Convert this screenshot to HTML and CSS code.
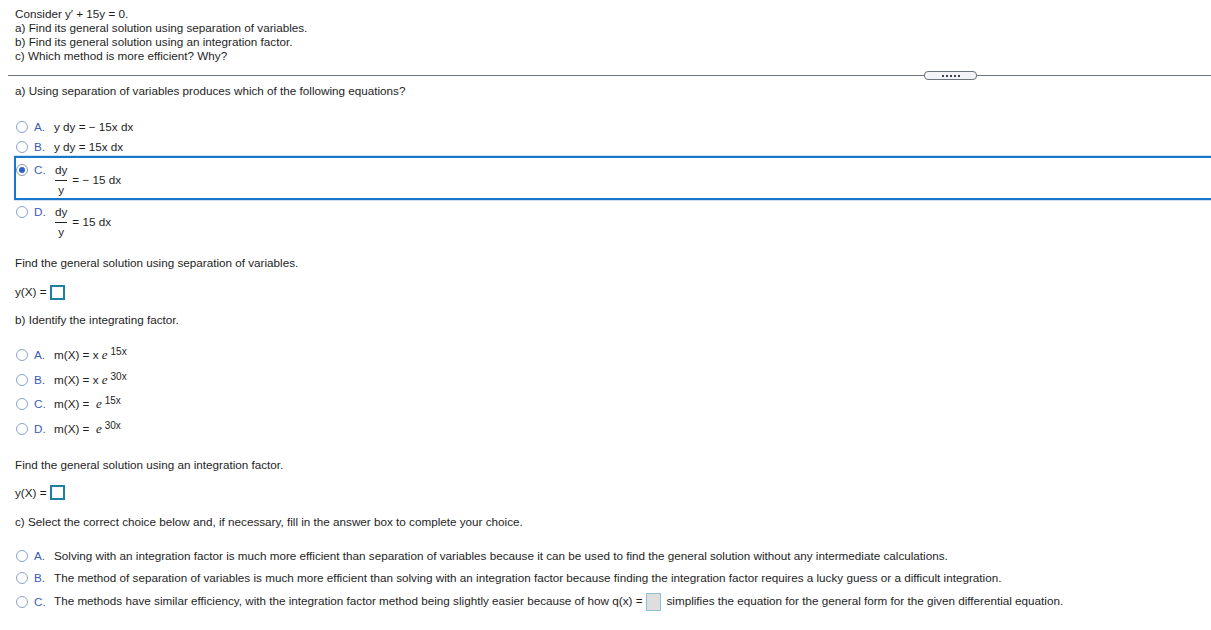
FILE: index.html
```html
<!DOCTYPE html>
<html lang="en">
<head>
<meta charset="utf-8">
<title>Differential equation question</title>
<link rel="stylesheet" href="styles.css">
</head>
<body>
<div class="page">
  <div class="intro">
    <p>Consider y&prime; + 15y = 0.</p>
    <p>a) Find its general solution using separation of variables.</p>
    <p>b) Find its general solution using an integration factor.</p>
    <p>c) Which method is more efficient? Why?</p>
  </div>

  <div class="rule"><span class="pill"><i></i><i></i><i></i><i></i><i></i></span></div>

  <p class="q q-a">a) Using separation of variables produces which of the following equations?</p>

  <div class="opts opts-a">
    <div class="opt">
      <span class="radio"></span><span class="lbl">A.</span>
      <span class="content">y dy = &minus; 15x dx</span>
    </div>
    <div class="opt">
      <span class="radio"></span><span class="lbl">B.</span>
      <span class="content">y dy = 15x dx</span>
    </div>
    <div class="opt sel">
      <span class="radio on"></span><span class="lbl">C.</span>
      <span class="content fracrow">
        <span class="frac"><span class="num">dy</span><span class="bar"></span><span class="den">y</span></span>
        <span class="rhs">= &minus; 15 dx</span>
      </span>
    </div>
    <div class="opt fopt">
      <span class="radio"></span><span class="lbl">D.</span>
      <span class="content fracrow">
        <span class="frac"><span class="num">dy</span><span class="bar"></span><span class="den">y</span></span>
        <span class="rhs">= 15 dx</span>
      </span>
    </div>
  </div>

  <p class="q q-find1">Find the general solution using separation of variables.</p>
  <div class="answer ans1">y(X) =<span class="ansbox"></span></div>

  <p class="q q-b">b) Identify the integrating factor.</p>

  <div class="opts opts-b">
    <div class="opt optb">
      <span class="radio"></span><span class="lbl">A.</span>
      <span class="content">m(X) = x <i class="e">e</i><sup>15x</sup></span>
    </div>
    <div class="opt optb">
      <span class="radio"></span><span class="lbl">B.</span>
      <span class="content">m(X) = x <i class="e">e</i><sup>30x</sup></span>
    </div>
    <div class="opt optb">
      <span class="radio"></span><span class="lbl">C.</span>
      <span class="content">m(X) = &nbsp;<i class="e">e</i><sup>15x</sup></span>
    </div>
    <div class="opt optb">
      <span class="radio"></span><span class="lbl">D.</span>
      <span class="content">m(X) = &nbsp;<i class="e">e</i><sup>30x</sup></span>
    </div>
  </div>

  <p class="q q-find2">Find the general solution using an integration factor.</p>
  <div class="answer ans2">y(X) =<span class="ansbox"></span></div>

  <p class="q q-c">c) Select the correct choice below and, if necessary, fill in the answer box to complete your choice.</p>

  <div class="opts opts-c">
    <div class="opt optc">
      <span class="radio"></span><span class="lbl">A.</span>
      <span class="content">Solving with an integration factor is much more efficient than separation of variables because it can be used to find the general solution without any intermediate calculations.</span>
    </div>
    <div class="opt optc">
      <span class="radio"></span><span class="lbl">B.</span>
      <span class="content">The method of separation of variables is much more efficient than solving with an integration factor because finding the integration factor requires a lucky guess or a difficult integration.</span>
    </div>
    <div class="opt optc optc-tall">
      <span class="radio"></span><span class="lbl">C.</span>
      <span class="content">The methods have similar efficiency, with the integration factor method being slightly easier because of how q(x) =<span class="graybox"></span>simplifies the equation for the general form for the given differential equation.</span>
    </div>
  </div>
</div>
</body>
</html>
```

FILE: styles.css
```css
html, body {
  margin: 0;
  background: #ffffff;
}

body {
  font-family: "Liberation Sans", Arial, sans-serif;
  font-size: 11.7px;
  line-height: 14px;
  color: #1e1e1e;
}

.page {
  padding: 7px 0 0 15px;
}

.intro p,
.q {
  margin: 0;
}

/* divider with pill */
.rule {
  display: flex;
  align-items: center;
  height: 9px;
  margin: 8px 0 0 -7px;
}

.rule::before {
  content: "";
  width: 916px;
  height: 1px;
  background: #6e747b;
}

.rule::after {
  content: "";
  flex: 1;
  height: 1px;
  background: #6e747b;
}

.pill {
  width: 53px;
  height: 9px;
  box-sizing: border-box;
  border: 1px solid #6e747b;
  border-radius: 4px;
  background: #f2f4f7;
  display: flex;
  justify-content: center;
  align-items: center;
  gap: 2px;
}

.pill i {
  width: 2px;
  height: 2px;
  background: #3d4248;
}

.q-a { margin-top: 4px; }
.q-find1 { margin-top: 17px; }
.q-b { margin-top: 13px; }
.q-find2 { margin-top: 16.67px; }
.q-c { margin-top: 14px; }

/* options */
.opts-a { margin-top: 19px; }
.opts-b { margin-top: 15.67px; }
.opts-c { margin-top: 16px; }

.opt {
  display: flex;
  align-items: flex-start;
  padding: 3px 0 3px 1px;
}

.radio {
  flex: none;
  width: 12px;
  height: 12px;
  box-sizing: border-box;
  border: 1px solid #8aa3cf;
  border-radius: 50%;
  background: #ffffff;
  margin-top: 1px;
  position: relative;
}

.radio.on {
  border-color: #8d97a8;
}

.radio.on::after {
  content: "";
  position: absolute;
  left: 2px;
  top: 2px;
  width: 6px;
  height: 6px;
  border-radius: 50%;
  background: #2f5fd0;
}

.lbl {
  flex: none;
  width: 20px;
  margin-left: 6px;
  color: #3a5bb5;
}

.content {
  white-space: nowrap;
}

.opt.sel {
  margin-top: -1px;
  margin-left: -1px;
  padding: 5px 0 1px 0;
  border: 2px solid #1778c9;
  border-right: 0;
  box-shadow: 0 -1px 0 #cfe3f4, 0 1px 0 #cfe3f4;
}

.opt.fopt {
  padding: 5px 0 0 1px;
}

.fracrow {
  display: flex;
  align-items: center;
}

.frac {
  display: flex;
  flex-direction: column;
  align-items: center;
  padding: 0 2px 0 1px;
}

.frac .num,
.frac .den {
  line-height: 14px;
}

.frac .bar {
  align-self: stretch;
  height: 1px;
  background: #222222;
  margin-top: 3px;
  margin-bottom: 2px;
}

.rhs {
  margin-left: 3px;
}

/* answer boxes */
.answer {
  display: flex;
  align-items: center;
  height: 16px;
}

.ans1 { margin-top: 14px; }
.ans2 { margin-top: 13px; }

.ansbox {
  width: 15px;
  height: 15px;
  box-sizing: border-box;
  border: 2px solid #1f7fa3;
  margin-left: 3px;
  background: #ffffff;
}

/* part b options */
.opt.optb {
  height: 24.67px;
  box-sizing: border-box;
  padding: 0 0 0 1px;
  align-items: center;
}

.opt.optb .radio {
  margin-top: 0;
}

.e {
  font-family: "Liberation Serif", "Times New Roman", serif;
  font-style: italic;
  font-size: 13px;
}

sup {
  font-size: 10px;
  line-height: 0;
  vertical-align: 4px;
  margin-left: 3px;
}

/* part c options */
.opt.optc {
  height: 22px;
  box-sizing: border-box;
  padding: 0 0 0 1px;
  align-items: center;
}

.opt.optc .radio {
  margin-top: 0;
}

.opt.optc-tall {
  height: 26px;
}

.graybox {
  display: inline-block;
  width: 15px;
  height: 18px;
  box-sizing: border-box;
  border: 1px solid #8dbfd8;
  background: #dedede;
  vertical-align: middle;
  margin: 0 5px 0 4px;
}
```
